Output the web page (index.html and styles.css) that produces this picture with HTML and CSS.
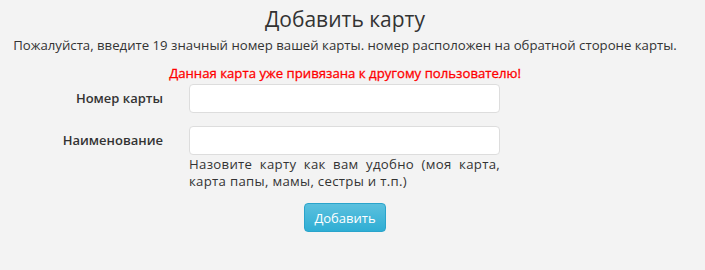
FILE: index.html
```html
<!DOCTYPE html>
<html lang="ru">
<head>
    <meta charset="UTF-8">
    <meta name="viewport" content="width=device-width, initial-scale=1.0">
    <title>Добавить карту</title>
    <link rel="stylesheet" href="styles.css">
</head>
<body>
    <div class="container">
        <h1 class="title">Добавить карту</h1>
        <p class="intro">Пожалуйста, введите 19 значный номер вашей карты. номер расположен на обратной стороне карты.</p>
        <p class="error">Данная карта уже привязана к другому пользователю!</p>

        <form class="card-form">
            <div class="row">
                <label for="cardNumber">Номер карты</label>
                <div class="field">
                    <input type="text" id="cardNumber">
                </div>
            </div>

            <div class="row">
                <label for="cardName">Наименование</label>
                <div class="field">
                    <input type="text" id="cardName">
                    <p class="hint">Назовите карту как вам удобно (моя карта, карта папы, мамы, сестры и т.п.)</p>
                </div>
            </div>

            <div class="actions">
                <button type="submit">Добавить</button>
            </div>
        </form>
    </div>
</body>
</html>
```

FILE: styles.css
```css
body {
    margin: 0;
    padding: 0;
    background: #f3f3f3;
    font-family: "Open Sans", sans-serif;
    color: #333;
}

.container {
    width: 690px;
}

.title {
    margin: 5px 0 0;
    text-align: center;
    font-size: 21px;
    font-weight: normal;
    line-height: 28px;
    color: #333;
}

.intro {
    margin: 3px 0 0;
    text-align: center;
    font-size: 13.2px;
    line-height: 18px;
}

.error {
    margin: 10px 0 0;
    text-align: center;
    font-size: 13.2px;
    line-height: 18px;
    color: #ff0000;
    -webkit-text-stroke: 0.3px #ff0000;
}

.card-form {
    margin-top: 2px;
}

.row {
    display: flex;
    align-items: flex-start;
    margin-bottom: 13px;
}

label {
    width: 163px;
    margin-right: 26px;
    text-align: right;
    font-size: 13px;
    font-weight: 600;
    line-height: 29px;
    color: #333;
}

.field {
    width: 311px;
}

input {
    display: block;
    box-sizing: border-box;
    width: 100%;
    height: 29px;
    border: 1px solid #ddd;
    border-radius: 4px;
    background: #fff;
}

.hint {
    margin: 1px 0 0;
    font-size: 13.2px;
    line-height: 17px;
    letter-spacing: 0.3px;
    text-align: justify;
}

.actions {
    margin-top: 2px;
    text-align: center;
}

button {
    width: 82px;
    height: 29px;
    border: 1px solid #2aa4cb;
    border-radius: 4px;
    background: linear-gradient(#5bc0de, #2faed4);
    color: #fff;
    font-family: inherit;
    font-size: 13px;
    cursor: pointer;
}
```
